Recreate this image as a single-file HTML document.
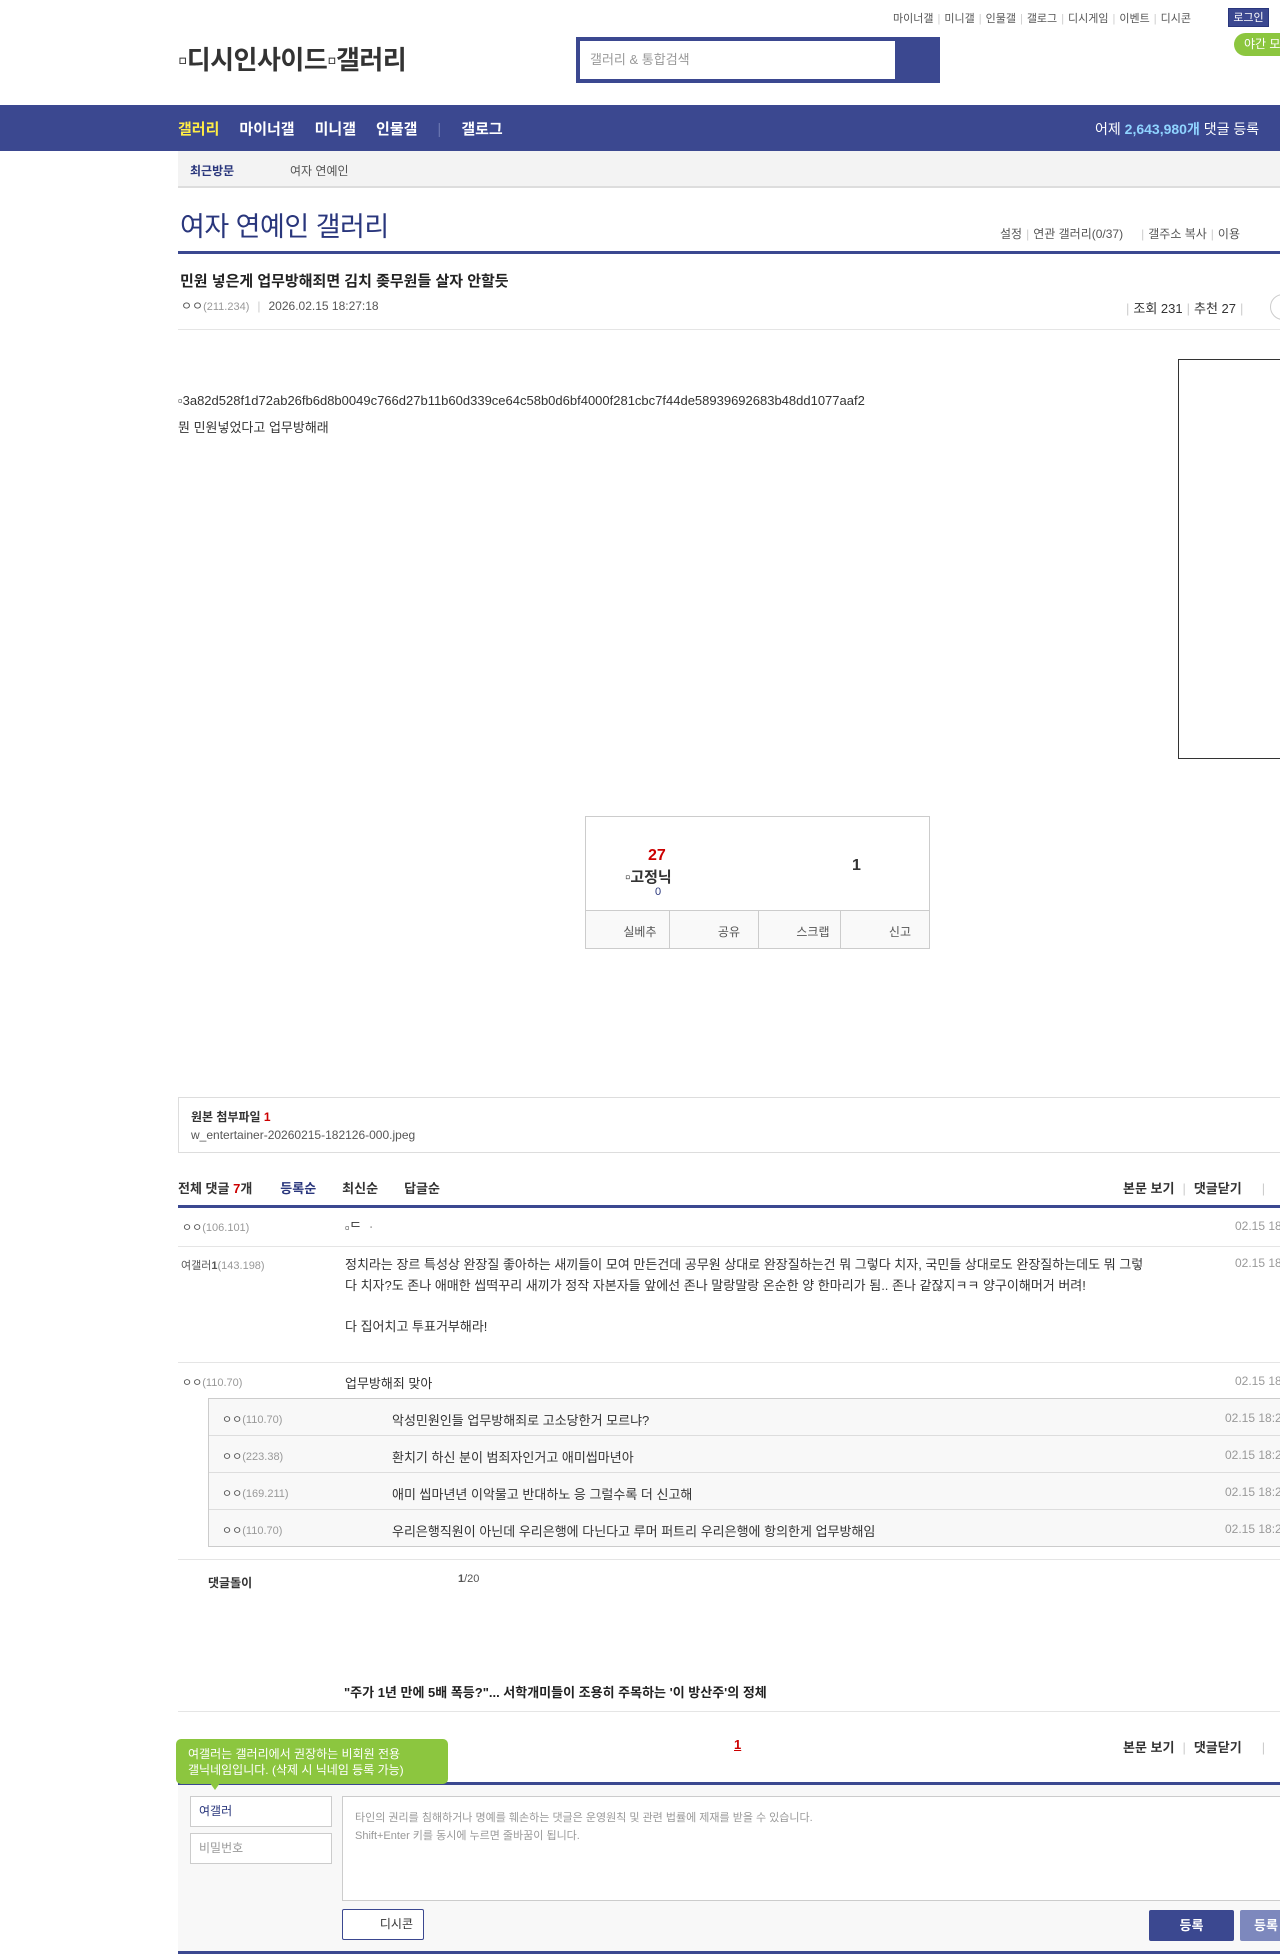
<!DOCTYPE html>
<html><head><meta charset="utf-8">
<style>
*{margin:0;padding:0;box-sizing:border-box}
body{width:1280px;height:1956px;position:relative;background:#fff;font-family:"Liberation Sans","Noto Sans CJK KR",sans-serif;color:#333;overflow:hidden}
.a{position:absolute;white-space:nowrap}
.nav{left:0;top:105px;width:1280px;height:46px;background:#3b4890}
.sep{color:#ccc;margin:0 4px}
.g{color:#999}
.line{position:absolute;left:178px;width:1102px;height:1px;background:#e5e5e5}
.nv{position:absolute;left:178px;width:1102px;height:3px;background:#3b4890}
.cm{font-size:13px;color:#333}
.ip{font-size:11px;color:#999}
.dt{font-size:12px;color:#999}
</style></head><body>
<div class="a" style="left:893px;top:10px;font-size:11px;color:#555">마이너갤<span class="sep">|</span>미니갤<span class="sep">|</span>인물갤<span class="sep">|</span>갤로그<span class="sep">|</span>디시게임<span class="sep">|</span>이벤트<span class="sep">|</span>디시콘</div>
<div class="a" style="left:1228px;top:8px;width:41px;height:19px;background:#3b4890;color:#fff;font-size:11px;line-height:19px;text-align:center;border:1px solid #29367c">로그인</div>
<div class="a" style="left:1234px;top:33px;width:60px;height:23px;background:#8cc63f;border-radius:12px;color:#fff;font-size:12px;line-height:23px;padding-left:10px">야간 모드</div>
<div class="a" style="left:178px;top:40px;font-size:26px;font-weight:bold;color:#333;letter-spacing:-0.5px">▫디시인사이드▫갤러리</div>
<div class="a" style="left:576px;top:37px;width:364px;height:46px;background:#3b4890"></div>
<div class="a" style="left:580px;top:41px;width:315px;height:38px;background:#fff;font-size:13px;color:#999;line-height:38px;padding-left:10px">갤러리 &amp; 통합검색</div>
<div class="a nav"></div>
<div class="a" style="left:178px;top:118px;font-size:15px;font-weight:bold;color:#fff"><span style="color:#ffed45">갤러리</span><span style="margin-left:20px">마이너갤</span><span style="margin-left:20px">미니갤</span><span style="margin-left:20px">인물갤</span><span style="margin-left:20px;color:#6a76b0;font-weight:normal">|</span><span style="margin-left:20px">갤로그</span></div>
<div class="a" style="left:1095px;top:119px;font-size:14px;color:#fff">어제 <b style="color:#8fd3ff">2,643,980개</b> 댓글 등록</div>
<div class="a" style="left:178px;top:151px;width:1102px;height:37px;background:#f3f3f3;border-bottom:2px solid #ddd"></div>
<div class="a" style="left:190px;top:162px;font-size:12px;font-weight:bold;color:#29367c">최근방문</div>
<div class="a" style="left:290px;top:162px;font-size:12px;color:#555">여자 연예인</div>
<div class="a" style="left:180px;top:205px;font-size:27px;color:#29367c;letter-spacing:-0.5px">여자 연예인 갤러리</div>
<div class="a" style="left:1000px;top:225px;font-size:12px;color:#555">설정<span class="sep">|</span>연관 갤러리(0/37)<span class="sep" style="margin-left:18px">|</span>갤주소 복사<span class="sep">|</span>이용</div>
<div class="nv" style="top:251px"></div>
<div class="a" style="left:180px;top:270px;font-size:15px;font-weight:bold;color:#222">민원 넣은게 업무방해죄면 김치 좆무원들 살자 안할듯</div>
<div class="a" style="left:181px;top:297px;font-size:12px;color:#555">ㅇㅇ<span class="ip">(211.234)</span><span class="sep" style="margin:0 8px">|</span>2026.02.15 18:27:18</div>
<div class="a" style="left:1122px;top:298px;font-size:13px;color:#333"><span class="sep">|</span>조회 231<span class="sep">|</span>추천 27<span class="sep">|</span></div>
<div class="a" style="left:1270px;top:294px;width:26px;height:26px;border:1px solid #ccc;border-radius:13px"></div>
<div class="line" style="top:329px"></div>
<div class="a" style="left:178px;top:393px;font-size:13px;color:#333">▫3a82d528f1d72ab26fb6d8b0049c766d27b11b60d339ce64c58b0d6bf4000f281cbc7f44de58939692683b48dd1077aaf2</div>
<div class="a" style="left:178px;top:417px;font-size:13px;color:#333">뭔 민원넣었다고 업무방해래</div>
<div class="a" style="left:1178px;top:359px;width:110px;height:400px;border:1px solid #333"></div>
<div class="a" style="left:585px;top:816px;width:345px;height:133px;border:1px solid #ccc"></div>
<div class="a" style="left:648px;top:847px;font-size:16px;font-weight:bold;color:#c00">27</div>
<div class="a" style="left:625px;top:866px;font-size:15px;font-weight:bold;color:#333">▫고정닉</div>
<div class="a" style="left:655px;top:886px;font-size:11px;color:#29367c">0</div>
<div class="a" style="left:852px;top:857px;font-size:16px;font-weight:bold;color:#333">1</div>
<div class="a" style="left:586px;top:910px;width:343px;height:38px;background:#f9f9f9;border-top:1px solid #ccc;display:flex;font-size:12px;color:#555">
<div style="flex:1;border-right:1px solid #ccc;text-align:right;padding:12px 12px 0 0">실베추</div>
<div style="flex:1;border-right:1px solid #ccc;text-align:right;padding:12px 18px 0 0">공유</div>
<div style="flex:1;border-right:1px solid #ccc;text-align:right;padding:12px 10px 0 0">스크랩</div>
<div style="flex:1;text-align:right;padding:12px 18px 0 0">신고</div></div>
<div class="a" style="left:178px;top:1097px;width:1110px;height:56px;border:1px solid #ddd"></div>
<div class="a" style="left:191px;top:1108px;font-size:12px;font-weight:bold;color:#333">원본 첨부파일 <span style="color:#c00">1</span></div>
<div class="a" style="left:191px;top:1128px;font-size:12px;color:#555">w_entertainer-20260215-182126-000.jpeg</div>
<div class="a" style="left:178px;top:1178px;font-size:13px;font-weight:bold;color:#333">전체 댓글 <span style="color:#c00">7</span>개<span style="margin-left:28px;color:#29367c">등록순</span><span style="margin-left:26px">최신순</span><span style="margin-left:26px">답글순</span></div>
<div class="a" style="left:1123px;top:1178px;font-size:13px;font-weight:bold;color:#333">본문 보기<span class="sep" style="margin:0 8px;font-weight:normal">|</span>댓글닫기<span class="sep" style="margin-left:20px;font-weight:normal">|</span></div>
<div class="nv" style="top:1205px"></div>
<div class="a ip" style="left:182px;top:1219px;font-size:11px"><span style="color:#555">ㅇㅇ</span>(106.101)</div>
<div class="a cm" style="left:345px;top:1217px">▫ᄃ ᆞ</div>
<div class="a dt" style="left:1235px;top:1219px">02.15 18:</div>
<div class="line" style="top:1246px"></div>
<div class="a ip" style="left:181px;top:1257px"><span style="color:#555">여갤러<b>1</b></span>(143.198)</div>
<div class="a cm" style="left:345px;top:1255px;line-height:20.5px;white-space:normal;width:808px">정치라는 장르 특성상 완장질 좋아하는 새끼들이 모여 만든건데 공무원 상대로 완장질하는건 뭐 그렇다 치자, 국민들 상대로도 완장질하는데도 뭐 그렇다 치자?도 존나 애매한 씹떡꾸리 새끼가 정작 자본자들 앞에선 존나 말랑말랑 온순한 양 한마리가 됨.. 존나 같잖지ㅋㅋ 양구이해머거 버려!<br><br>다 집어치고 투표거부해라!</div>
<div class="a dt" style="left:1235px;top:1256px">02.15 18:</div>
<div class="line" style="top:1362px"></div>
<div class="a ip" style="left:182px;top:1374px"><span style="color:#555">ㅇㅇ</span>(110.70)</div>
<div class="a cm" style="left:345px;top:1373px">업무방해죄 맞아</div>
<div class="a dt" style="left:1235px;top:1374px">02.15 18:</div>
<div class="a" style="left:208px;top:1398px;width:1080px;height:149px;background:#f8f8f8;border:1px solid #ccc"></div>
<div class="a" style="left:209px;top:1435px;width:1080px;height:1px;background:#ddd"></div>
<div class="a" style="left:209px;top:1472px;width:1080px;height:1px;background:#ddd"></div>
<div class="a" style="left:209px;top:1509px;width:1080px;height:1px;background:#ddd"></div>
<div class="a ip" style="left:222px;top:1411px"><span style="color:#555">ㅇㅇ</span>(110.70)</div>
<div class="a cm" style="left:392px;top:1410px">악성민원인들 업무방해죄로 고소당한거 모르냐?</div>
<div class="a dt" style="left:1225px;top:1411px">02.15 18:2</div>
<div class="a ip" style="left:222px;top:1448px"><span style="color:#555">ㅇㅇ</span>(223.38)</div>
<div class="a cm" style="left:392px;top:1447px">환치기 하신 분이 범죄자인거고 애미씹마년아</div>
<div class="a dt" style="left:1225px;top:1448px">02.15 18:2</div>
<div class="a ip" style="left:222px;top:1485px"><span style="color:#555">ㅇㅇ</span>(169.211)</div>
<div class="a cm" style="left:392px;top:1484px">애미 씹마년년 이악물고 반대하노 응 그럴수록 더 신고해</div>
<div class="a dt" style="left:1225px;top:1485px">02.15 18:2</div>
<div class="a ip" style="left:222px;top:1522px"><span style="color:#555">ㅇㅇ</span>(110.70)</div>
<div class="a cm" style="left:392px;top:1521px">우리은행직원이 아닌데 우리은행에 다닌다고 루머 퍼트리 우리은행에 항의한게 업무방해임</div>
<div class="a dt" style="left:1225px;top:1522px">02.15 18:2</div>
<div class="line" style="top:1559px"></div>
<div class="a" style="left:208px;top:1574px;font-size:12px;font-weight:bold;color:#333">댓글돌이</div>
<div class="a" style="left:458px;top:1573px;font-size:11px;color:#555"><b>1</b>/20</div>
<div class="a" style="left:344px;top:1682px;font-size:13px;font-weight:bold;color:#222">"주가 1년 만에 5배 폭등?"... 서학개미들이 조용히 주목하는 '이 방산주'의 정체</div>
<div class="line" style="top:1711px"></div>
<div class="a" style="left:734px;top:1737px;font-size:13px;font-weight:bold;color:#c00;text-decoration:underline">1</div>
<div class="a" style="left:1123px;top:1737px;font-size:13px;font-weight:bold;color:#333">본문 보기<span class="sep" style="margin:0 8px;font-weight:normal">|</span>댓글닫기<span class="sep" style="margin-left:20px;font-weight:normal">|</span></div>
<div class="a" style="left:178px;top:1782px;width:1102px;height:172px;background:#f8f8f8;border-top:3px solid #3b4890;border-bottom:3px solid #3b4890"></div>
<div class="a" style="left:176px;top:1739px;width:272px;height:45px;background:#8cc63f;border-radius:5px;color:#fff;font-size:12px;line-height:16px;padding:7px 12px">여갤러는 갤러리에서 권장하는 비회원 전용<br>갤닉네임입니다. (삭제 시 닉네임 등록 가능)</div>
<div class="a" style="left:210px;top:1783px;width:0;height:0;border-left:5px solid transparent;border-right:5px solid transparent;border-top:7px solid #8cc63f"></div>
<div class="a" style="left:190px;top:1796px;width:142px;height:31px;background:#fff;border:1px solid #ccc;font-size:12px;color:#29367c;line-height:29px;padding-left:8px">여갤러</div>
<div class="a" style="left:190px;top:1833px;width:142px;height:31px;background:#fff;border:1px solid #ccc;font-size:12px;color:#999;line-height:29px;padding-left:8px">비밀번호</div>
<div class="a" style="left:342px;top:1796px;width:950px;height:105px;background:#fff;border:1px solid #ccc;font-size:11px;color:#999;line-height:18px;padding:12px 12px">타인의 권리를 침해하거나 명예를 훼손하는 댓글은 운영원칙 및 관련 법률에 제재를 받을 수 있습니다.<br>Shift+Enter 키를 동시에 누르면 줄바꿈이 됩니다.</div>
<div class="a" style="left:342px;top:1909px;width:82px;height:31px;background:#fff;border:1px solid #3b4890;border-radius:2px;font-size:12px;color:#333;line-height:29px;text-align:right;padding-right:10px">디시콘</div>
<div class="a" style="left:1149px;top:1910px;width:85px;height:31px;background:#3b4890;border-radius:2px;color:#fff;font-size:13px;font-weight:bold;line-height:31px;text-align:center">등록</div>
<div class="a" style="left:1240px;top:1910px;width:60px;height:31px;background:#7d88bd;border-radius:2px;color:#fff;font-size:13px;font-weight:bold;line-height:31px;padding-left:14px">등록</div>
</body></html>
